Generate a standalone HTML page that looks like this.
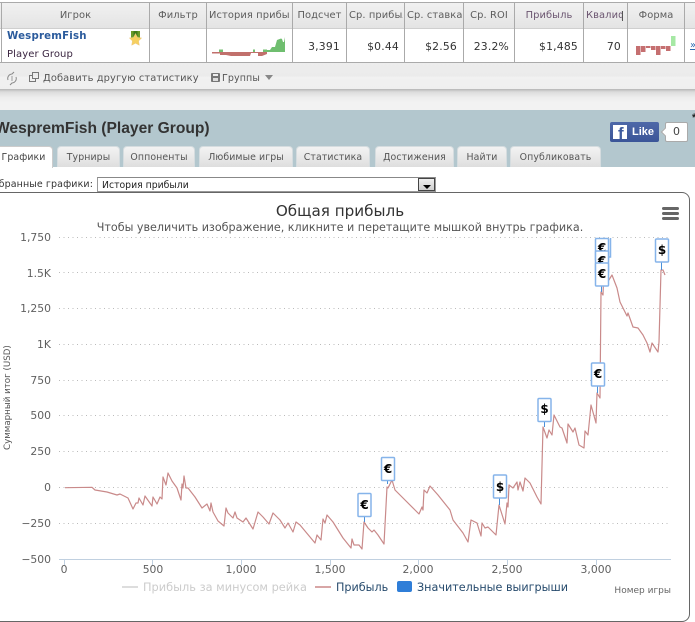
<!DOCTYPE html>
<html><head><meta charset="utf-8">
<style>
html,body{margin:0;padding:0;width:695px;height:602px;overflow:hidden;background:#fff;font-family:"DejaVu Sans","Liberation Sans",sans-serif;}
.a{position:absolute;white-space:nowrap;}
.th{position:absolute;top:3px;height:25px;line-height:25px;font-size:9.9px;color:#5c5c5c;text-align:center;overflow:hidden;white-space:nowrap;letter-spacing:.1px;}
.td{position:absolute;top:30px;height:33px;line-height:33px;font-size:10.8px;color:#333;text-align:right;white-space:nowrap;letter-spacing:.2px;}
.v{position:absolute;top:3px;height:60px;width:1px;background:#aaa;}
.tab{position:absolute;top:146px;height:21px;line-height:22px;font-size:9.4px;color:#555;text-align:center;background:linear-gradient(#f3f3f3,#dedede);border:1px solid #d5dcdf;border-bottom:0;border-radius:4px 4px 0 0;box-sizing:border-box;white-space:nowrap;letter-spacing:.1px;}
</style></head>
<body>
<div class="a" style="left:0;top:2px;width:695px;height:1px;background:#aaa"></div>
<div class="a" style="left:0;top:3px;width:695px;height:25px;background:linear-gradient(#f1f1f1,#e4e4e4)"></div>
<div class="a" style="left:0;top:28px;width:695px;height:1px;background:#cfcfcf"></div>
<div class="a" style="left:0;top:62px;width:695px;height:1px;background:#aaa"></div>
<div class="v" style="left:1px"></div><div class="v" style="left:149px"></div><div class="v" style="left:206px"></div><div class="v" style="left:292px"></div><div class="v" style="left:346px"></div><div class="v" style="left:404px"></div><div class="v" style="left:463px"></div><div class="v" style="left:514px"></div><div class="v" style="left:583px"></div><div class="v" style="left:627px"></div><div class="v" style="left:684px"></div>

<div class="th" style="left:2px;width:147px">Игрок</div>
<div class="th" style="left:150px;width:56px">Фильтр</div>
<div class="th" style="left:209px;width:81px;text-align:left">История прибыль</div>
<div class="th" style="left:293px;width:53px">Подсчет</div>
<div class="th" style="left:349px;width:54px;text-align:left">Ср. прибыль</div>
<div class="th" style="left:407px;width:55px;text-align:left">Ср. ставка</div>
<div class="th" style="left:464px;width:50px">Ср. ROI</div>
<div class="th" style="left:515px;width:68px;color:#6b5570">Прибыль</div>
<div class="th" style="left:586px;width:37px;text-align:left;color:#6b5570">Квалиф</div>
<div class="a" style="left:622px;top:11px;width:1px;height:10px;background:#555"></div>
<div class="th" style="left:628px;width:56px">Форма</div>

<div class="a" style="left:7px;top:30px;font-size:10.2px;line-height:13px;font-weight:bold;color:#2a5a9c;letter-spacing:.2px">WespremFish</div>
<div class="a" style="left:7px;top:48px;font-size:10px;line-height:13px;color:#3a2540;letter-spacing:.1px">Player Group</div>
<svg class="a" style="left:128px;top:30px" width="16" height="18" viewBox="0 0 16 18">
<rect x="3" y="1" width="9" height="8" fill="#6a9a2a"/><rect x="5.5" y="1" width="4" height="5" fill="#3f7a1a"/>
<path d="M7.500 3.500l1.900 3.900 4.300.6-3.100 3 .7 4.300-3.800-2-3.800 2 .7-4.300-3.100-3 4.300-.6z" fill="#f6d060" stroke="#ecc98a" stroke-width=".5"/>
</svg>

<svg class="a" style="left:207px;top:29px" width="85" height="33">
<path d="M5 23H60V25L55 27L51 27V24H44L43 27H35L33 27H24L19 26H13V24.500H5Z" fill="#c1706c"/>
<path d="M12 23V20.500H16V23ZM46 23V20.500H48V23ZM56 23V20.500H60V23Z" fill="#74bf72"/>
<path d="M60 23V21L63 21L65 18L68 18L70 11L74 9.500L75 10L76 13L77 13L78 8V23Z" fill="#6fbe6f"/>
</svg>

<div class="td" style="left:293px;width:47px">3,391</div>
<div class="td" style="left:347px;width:52px">$0.44</div>
<div class="td" style="left:405px;width:52px">$2.56</div>
<div class="td" style="left:464px;width:45px">23.2%</div>
<div class="td" style="left:515px;width:63px">$1,485</div>
<div class="td" style="left:584px;width:37px">70</div>

<svg class="a" style="left:628px;top:30px" width="56" height="32">
<g fill="#c56f70"><rect x="8" y="16" width="4.500" height="9"/><rect x="13" y="16" width="4.500" height="6"/><rect x="18" y="16" width="4.500" height="2"/><rect x="23" y="16" width="4.500" height="4"/><rect x="28" y="16" width="4.500" height="9"/><rect x="33" y="16" width="4.500" height="3"/><rect x="38" y="16" width="4.500" height="5"/></g>
<rect x="43" y="6" width="4.500" height="10" fill="#a6e8a4"/>
</svg>
<div class="a" style="left:690px;top:40px;font-size:10px;color:#2a6ab0;text-decoration:underline">»</div>

<!-- toolbar -->
<div class="a" style="left:0;top:63px;width:695px;height:26px;background:linear-gradient(#ededed 0,#ebebeb 50%,#f1f1f1 55%,#efefef 100%)"></div>
<div class="a" style="left:0;top:89px;width:695px;height:21px;background:linear-gradient(#b5b5b5 0,#dcdcdc 3px,#ececec 8px,#f2f2f2 14px)"></div>
<svg class="a" style="left:6px;top:71px" width="12" height="15" fill="none" stroke="#888" stroke-width="1">
<path d="M2 9A4.500 4.500 0 0 1 6 3L8 1M10 6A4.500 4.500 0 0 1 6 12L4 14"/><path d="M6 5V10" stroke-width=".8"/></svg>
<svg class="a" style="left:29px;top:72px" width="11" height="11" fill="none" stroke="#777" stroke-width="1"><rect x="3.500" y=".5" width="6" height="6"/><path d="M3 3.500H.5V9.500H6.500V7"/></svg>
<div class="a" style="left:43px;top:71px;font-size:9.9px;line-height:15px;color:#555;letter-spacing:.1px">Добавить другую статистику</div>
<svg class="a" style="left:211px;top:72px" width="10" height="11"><rect x="0" y="1" width="9" height="9" rx="1" fill="#777"/><rect x="2" y="2" width="5" height="2" fill="#eee"/><rect x="2" y="6" width="5" height="3" fill="#ddd"/></svg>
<div class="a" style="left:222px;top:71px;font-size:9.5px;line-height:15px;color:#555;letter-spacing:.1px">Группы</div>
<div class="a" style="left:265px;top:75px;width:0;height:0;border-left:4px solid transparent;border-right:4px solid transparent;border-top:5px solid #888"></div>

<!-- blue header -->
<div class="a" style="left:0;top:110px;width:695px;height:57px;background:#b3c7ce"></div>
<div class="a" style="left:-5px;top:119px;font:bold 15.6px/20px 'Liberation Sans',sans-serif;color:#333">WespremFish (Player Group)</div>
<div class="a" style="left:692px;top:112px;font:bold 11px/12px 'Liberation Sans',sans-serif;color:#222">*</div>

<div class="a" style="left:610px;top:122px;width:49px;height:20px;background:linear-gradient(#4e69a8,#3b5598);border-radius:2px"></div>
<div class="a" style="left:613px;top:125px;width:14px;height:14px;background:#fff;overflow:hidden"><div style="position:absolute;left:5px;top:1px;font:bold 17px/15px 'Liberation Sans',sans-serif;color:#3f5c9e">f</div></div>
<div class="a" style="left:632px;top:125px;font:bold 11px/14px 'Liberation Sans',sans-serif;color:#fff">Like</div>
<div class="a" style="left:665px;top:122px;width:23px;height:20px;box-sizing:border-box;background:#fff;border:1px solid #aaa;border-radius:2px;text-align:center;font:11px/18px 'DejaVu Sans',sans-serif;color:#444">0</div>
<div class="a" style="left:662px;top:129px;width:5px;height:5px;background:#fff;border-left:1px solid #aaa;border-bottom:1px solid #aaa;transform:rotate(45deg)"></div>

<div class="tab" style="left:-6px;width:59px;height:22px;background:#fff;color:#444;border-color:#ccc">Графики</div>
<div class="tab" style="left:57px;width:63px">Турниры</div>
<div class="tab" style="left:123px;width:72px">Оппоненты</div>
<div class="tab" style="left:199px;width:94px">Любимые игры</div>
<div class="tab" style="left:296px;width:74px">Статистика</div>
<div class="tab" style="left:375px;width:79px">Достижения</div>
<div class="tab" style="left:457px;width:50px">Найти</div>
<div class="tab" style="left:510px;width:91px">Опубликовать</div>

<div class="a" style="right:602px;top:178px;font-size:9.5px;line-height:14px;color:#333;letter-spacing:.1px">Избранные графики:</div>
<div class="a" style="left:97px;top:177px;width:339px;height:15px;box-sizing:border-box;background:#fff;border:1px solid #999;border-top-color:#888;font-size:9.3px;line-height:15px;color:#222;padding-left:4px">История прибыли</div>
<div class="a" style="left:418px;top:178px;width:17px;height:13px;box-sizing:border-box;background:linear-gradient(#eee,#cfcfcf);border:1px solid #444"></div>
<div class="a" style="left:423px;top:185px;width:0;height:0;border-left:4px solid transparent;border-right:4px solid transparent;border-top:4px solid #000"></div>

<!-- chart -->
<div class="a" style="left:-10px;top:192px;width:700px;height:430px;box-sizing:border-box;border:1px solid #666;border-radius:8px;background:#fff"></div>

<svg class="a" style="left:0;top:0" width="695" height="602" font-family="'DejaVu Sans',sans-serif">
<text x="340" y="216" font-size="15.2" fill="#333" text-anchor="middle">Общая прибыль</text>
<text x="340" y="231" font-size="11.15" fill="#555" text-anchor="middle">Чтобы увеличить изображение, кликните и перетащите мышкой внутрь графика.</text>
<g fill="#666"><rect x="662" y="207" width="17" height="3" rx="1.500"/><rect x="662" y="212" width="17" height="3" rx="1.500"/><rect x="662" y="217" width="17" height="3" rx="1.500"/></g>

<g stroke="#bbb" stroke-width="1" stroke-dasharray="1 3.500">
<path d="M59 237.500H669M59 272.500H669M59 308.500H669M59 344.500H669M59 380.500H669M59 415.500H669M59 451.500H669M59 487.500H669M59 523.500H669"/></g>
<path d="M59 559.500H671" stroke="#c0d0e0" stroke-width="1"/>
<path d="M64.500 559V565M152.500 559V565M241.500 559V565M330.500 559V565M418.500 559V565M507.500 559V565M596.500 559V565" stroke="#c0d0e0"/>

<g font-size="10.8" fill="#606060" text-anchor="end">
<text x="51" y="241">1,750</text><text x="51" y="277">1.5K</text><text x="51" y="312">1,250</text><text x="51" y="348">1K</text><text x="51" y="384">750</text><text x="51" y="419">500</text><text x="51" y="455">250</text><text x="51" y="491">0</text><text x="51" y="527">−250</text><text x="51" y="563">−500</text>
</g>
<g font-size="10.8" fill="#606060" text-anchor="middle">
<text x="64" y="573">0</text><text x="153" y="573">500</text><text x="241" y="573">1,000</text><text x="330" y="573">1,500</text><text x="418" y="573">2,000</text><text x="507" y="573">2,500</text><text x="596" y="573">3,000</text>
</g>
<text transform="translate(10,450) rotate(-90)" font-size="8.700" fill="#555">Суммарный итог (USD)</text>
<text x="671" y="593" font-size="9" fill="#666" text-anchor="end">Номер игры</text>

<path d="M122 587H138" stroke="#ddd" stroke-width="2"/>
<text x="143" y="591" font-size="11.35" fill="#ccc">Прибыль за минусом рейка</text>
<path d="M315 587H331" stroke="#d8a6a6" stroke-width="2"/>
<text x="336" y="591" font-size="11.2" fill="#274b6d">Прибыль</text>
<rect x="397" y="581" width="15" height="11" rx="2" fill="#2f7ed8"/>
<text x="417" y="591" font-size="11.2" fill="#274b6d">Значительные выигрыши</text>

<path fill="none" stroke="#c98a8a" stroke-width="1.200" stroke-linejoin="round" d="M65 487.700L92 487.300L95 490L107 492L117 495L120 494L128 498L133 509L136 503L138 503L139 498L143 505L145 496L152 506L153 497L157 504L160 497L162 499L163 477L166 485L168 473L172 481L177 488L181 500L182 484L183 488L184 476L186 488L188 488L195 497L202 508L207 504L210 511L211 503L213 512L218 521L224 526L226 508L228 513L233 518L235 512L237 518L240 520L243 522L246 518L253 529L258 512L263 517L269 524L273 513L280 520L285 528L288 523L293 532L296 522L300 525L315 543L317 535L321 540L323 519L325 523L327 515L333 522L343 538L351 548L352 539L354 545L359 545L362 549L364 522L368 528L372 532L374 530L378 535L384 544L387 487L388 488L392 480L395 490L403 498L415 510L419 514L422 507L423 510L424 490L427 493L430 486L438 495L450 510L453 520L463 533L468 542L471 520L477 523L481 536L482 523L485 528L488 527L492 531L496 535L499 505L505 524L507 503L508 507L509 485L513 488L517 482L518 490L520 482L523 491L525 478L530 483L537 497L541 504L543 427L547 438L549 430L552 435L554 415L560 427L562 428L567 443L568 424L573 432L575 428L579 445L584 448L585 431L588 435L591 405L596 423L597 393L600 398L601 292L603 295L604 268L607 283L612 275L617 288L620 302L625 312L627 316L628 313L633 327L638 328L643 335L647 343L650 352L652 343L658 352L659 342L661 270L663 270L665 275"/>

<g stroke="#4a90d9" stroke-width="1"><path d="M364.500 516V522M387.500 480V484M499.500 498V505M544.500 421V427M597.500 386V393M601.500 286V292M661.500 262V270"/></g>
<path d="M610.500 238V257L606 257" fill="none" stroke="#86b4ea" stroke-width="1.500"/>
<g font-size="12" font-weight="bold" fill="#000" text-anchor="middle">
<g fill="#fff" stroke="#86b4ea" stroke-width="1.500"><rect x="595.500" y="238.500" width="13" height="22" rx="1"/></g>
<text x="602" y="252">€</text>
<g fill="#fff" stroke="#86b4ea" stroke-width="1.500"><rect x="595.500" y="251" width="13" height="22" rx="1"/></g>
<text x="602" y="265">€</text>
<g fill="#fff" stroke="#86b4ea" stroke-width="1.500"><rect x="595.500" y="263" width="13" height="23" rx="1"/></g>
<text x="602" y="278">€</text>
<g fill="#fff" stroke="#86b4ea" stroke-width="1.500">
<rect x="358" y="493.500" width="13" height="23" rx="1"/>
<rect x="381.500" y="457.500" width="13" height="23" rx="1"/>
<rect x="493.500" y="475" width="13" height="23" rx="1"/>
<rect x="538" y="398.500" width="13" height="23" rx="1"/>
<rect x="591.500" y="363" width="13" height="23" rx="1"/>
<rect x="655.500" y="239" width="13" height="23" rx="1"/>
</g>
<text x="364.500" y="509">€</text><text x="388" y="473">€</text><text x="500" y="491">$</text><text x="544.500" y="413">$</text><text x="598" y="378">€</text><text x="662" y="254">$</text>
</g>
</svg>
</body></html>
